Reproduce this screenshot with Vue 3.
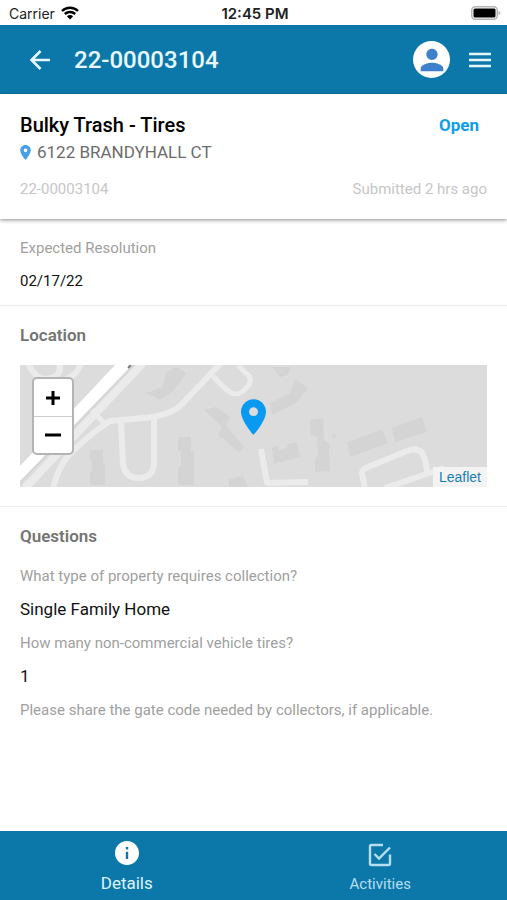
<script setup>
import { ref } from 'vue'

const activeTab = ref('details')

const request = {
  id: '22-00003104',
  title: 'Bulky Trash - Tires',
  status: 'Open',
  address: '6122 BRANDYHALL CT',
  submitted: 'Submitted 2 hrs ago',
  resolution: '02/17/22',
}

const questions = [
  { label: 'What type of property requires collection?', answer: 'Single Family Home' },
  { label: 'How many non-commercial vehicle tires?', answer: '1' },
  { label: 'Please share the gate code needed by collectors, if applicable.', answer: '' },
]
</script>

<template>
  <div class="app">
    <div class="status-bar">
      <div class="carrier">
        <span>Carrier</span>
        <svg class="wifi" viewBox="0 0 18 14" width="18" height="14" aria-hidden="true">
          <path d="M1 5 A11.5 11.5 0 0 1 17 5" />
          <path d="M3.8 8 A7.6 7.6 0 0 1 14.2 8" />
          <path class="dot" d="M9 13.6 L5.9 10.3 A4.4 4.4 0 0 1 12.1 10.3 Z" />
        </svg>
      </div>
      <div class="time">12:45 PM</div>
      <div class="battery">
        <svg viewBox="0 0 30 14" width="30" height="14" aria-hidden="true">
          <rect x="0.75" y="0.75" width="25.5" height="12.5" rx="3.5" fill="#fff" stroke="#b4b4b4" stroke-width="1.5" />
          <rect x="2.5" y="2.5" width="22" height="9" rx="1.5" fill="#000" />
          <path d="M27.5 5 Q29.5 5.5 29.5 7 Q29.5 8.5 27.5 9 Z" fill="#b4b4b4" />
        </svg>
      </div>
    </div>

    <header class="toolbar">
      <button class="icon-button" type="button" aria-label="Back">
        <svg viewBox="0 0 20 20" width="20" height="20" aria-hidden="true">
          <path d="M10.5 1 L1.6 10 L10.5 19 M1.6 10 H20" fill="none" stroke="#e9f8ff" stroke-width="2.5" />
        </svg>
      </button>
      <h1>{{ request.id }}</h1>
      <button class="icon-button avatar" type="button" aria-label="Profile">
        <svg viewBox="0 0 24 24" width="34" height="34" aria-hidden="true">
          <path fill="#3f80cd" d="M12 12c2.21 0 4-1.79 4-4s-1.79-4-4-4-4 1.79-4 4 1.79 4 4 4zm0 2c-2.67 0-8 1.34-8 4v2h16v-2c0-2.66-5.33-4-8-4z" />
        </svg>
      </button>
      <button class="icon-button" type="button" aria-label="Menu">
        <svg viewBox="0 0 24 16" width="24" height="16" aria-hidden="true">
          <path d="M1 2 H23 M1 8 H23 M1 14 H23" stroke="#e4f5fd" stroke-width="2.4" />
        </svg>
      </button>
    </header>

    <main>
      <section class="summary">
        <div class="row">
          <h2>{{ request.title }}</h2>
          <span class="state">{{ request.status }}</span>
        </div>
        <div class="address">
          <svg viewBox="5 2 14 20" width="11" height="15" aria-hidden="true">
            <path fill="#479fe8" d="M12 2C8.13 2 5 5.13 5 9c0 5.25 7 13 7 13s7-7.75 7-13c0-3.87-3.13-7-7-7zm0 9.5c-1.38 0-2.5-1.12-2.5-2.5s1.12-2.5 2.5-2.5 2.5 1.12 2.5 2.5-1.12 2.5-2.5 2.5z" />
          </svg>
          <span>{{ request.address }}</span>
        </div>
        <div class="row meta">
          <span>{{ request.id }}</span>
          <span>{{ request.submitted }}</span>
        </div>
      </section>

      <section class="block resolution">
        <p class="label">Expected Resolution</p>
        <p class="date">{{ request.resolution }}</p>
      </section>

      <section class="block location">
        <h3>Location</h3>
        <div class="map">
          <svg class="tiles" viewBox="0 0 467 122" preserveAspectRatio="xMidYMid slice" aria-hidden="true">
            <rect width="467" height="122" fill="#dcdcdc" />
            <g fill="#d4d4d4">
              <path d="M126 28 L143 22 L146 8 L156 2 L166 8 L156 22 L152 27 L140 35 Z" />
              <path d="M184 45 L196 42 L210 52 L206 60 L224 82 L219 87 L198 70 L202 62 Z" />
              <path d="M158 72 H171 V86 H174 V120 H158 V102 H161 V86 H158 Z" />
              <path d="M70 85 H83 V100 H85 V120 H70 V106 H72 V96 H70 Z" />
              <path d="M209 114 L223 111 L228 122 H209 Z" />
              <path d="M250 38 L270 28 L275 14 L288 23 L276 38 L252 50 Z" />
              <path d="M252 2 H270 L268 10 L260 12 Z" />
              <path d="M290 55 L303 53 L304 75 L309 78 L310 106 L295 107 L295 94 L298 90 L297 72 L291 70 Z" />
              <path d="M252 83 L258 81 L259 85 L267 83 L268 79 L277 77 L280 92 L254 99 Z" />
              <path d="M327 77 L362 65 L368 78 L330 92 Z" />
              <path d="M372 63 L402 52 L407 67 L375 77 Z" />
              <circle cx="314" cy="71" r="2" />
            </g>
            <g fill="none" stroke="#ebebeb" stroke-width="6" stroke-linejoin="round">
              <path d="M8 -2 C14 11 21 17 34 12 Q42 8 39 -2 M61 -2 Q58 10 44 15" />
              <path d="M33 123 Q38 103 48 91 Q66 72 90 56 L133 52 Q151 49 160 41 L201 -2" />
              <path d="M101 57 L103 99 Q105 113 119 113 Q134 112 134 98 V52" />
              <path d="M193 11 Q209 29 215 29 Q222 29 228 21 Q233 14 227 9 L218 1" stroke-width="5" />
              <path d="M241 84 L247 118 L288 117" />
              <path d="M345 123 L342 109 Q342 104 348 102 L387 86 Q397 82 402 88 Q407 97 407 109 M365 123 L424 103" />
            </g>
            <path d="M5 123 L123 -2" stroke="#ebebeb" stroke-width="8" />
            <path d="M72 45 L84 58" stroke="#ebebeb" stroke-width="5" />
            <path d="M0 101 L96 -1 H113 L0 116 Z" fill="#fff" />
            <path d="M0 118 L114 0" stroke="#cfcfcf" stroke-width="1" />
            <path d="M108 3 L111 0" stroke="#777" stroke-width="2" />
          </svg>
          <svg class="marker" viewBox="5 2 14 20" width="25" height="36" role="img" aria-label="Request location">
            <path fill="#089af0" d="M12 2C8.13 2 5 5.13 5 9c0 5.25 7 13 7 13s7-7.75 7-13c0-3.87-3.13-7-7-7zm0 9.5c-1.38 0-2.5-1.12-2.5-2.5s1.12-2.5 2.5-2.5 2.5 1.12 2.5 2.5-1.12 2.5-2.5 2.5z" />
          </svg>
          <div class="zoom">
            <button type="button" aria-label="Zoom in">
              <svg viewBox="0 0 16 16" width="16" height="16" aria-hidden="true"><path d="M1 8 H15 M8 1 V15" /></svg>
            </button>
            <button type="button" aria-label="Zoom out">
              <svg viewBox="0 0 16 16" width="16" height="16" aria-hidden="true"><path d="M0 8 H16" /></svg>
            </button>
          </div>
          <div class="attribution"><a href="#">Leaflet</a></div>
        </div>
      </section>

      <section class="block questions">
        <h3>Questions</h3>
        <dl>
          <template v-for="q in questions" :key="q.label">
            <dt class="label">{{ q.label }}</dt>
            <dd v-if="q.answer">{{ q.answer }}</dd>
          </template>
        </dl>
      </section>
    </main>

    <nav class="tabs">
      <button type="button" :class="{ active: activeTab === 'details' }" @click="activeTab = 'details'">
        <svg viewBox="2 2 20 20" width="24" height="24" aria-hidden="true">
          <path fill="#fff" d="M12 2C6.48 2 2 6.48 2 12s4.48 10 10 10 10-4.48 10-10S17.52 2 12 2zm1 15h-2v-6h2v6zm0-8h-2V7h2v2z" />
        </svg>
        <span>Details</span>
      </button>
      <button type="button" :class="{ active: activeTab === 'activities' }" @click="activeTab = 'activities'">
        <svg viewBox="0 0 24 24" width="24" height="24" aria-hidden="true">
          <path d="M15 2 H3.5 Q2 2 2 3.5 V20.5 Q2 22 3.5 22 H20.5 Q22 22 22 20.5 V11.5 M6.5 11 L11 15.5 L22 4.5" fill="none" stroke="#b5def2" stroke-width="2.4" />
        </svg>
        <span>Activities</span>
      </button>
    </nav>
  </div>
</template>

<style>
body {
  margin: 0;
  background: #fff;
}
</style>

<style scoped>
.app {
  display: flex;
  flex-direction: column;
  min-height: 100vh;
  font-family: Roboto, "Liberation Sans", sans-serif;
  color: #111;
  background: #fff;
}
h1, h2, h3, p, dl, dd {
  margin: 0;
}
button {
  padding: 0;
  border: 0;
  background: none;
  font: inherit;
  color: inherit;
  cursor: pointer;
}
svg {
  display: block;
  flex: none;
}
.status-bar {
  display: grid;
  grid-template-columns: 1fr auto 1fr;
  align-items: center;
  height: 25px;
  padding: 1px 6px 0 9px;
  box-sizing: border-box;
  font-family: Inter, "Liberation Sans", sans-serif;
  font-size: 14px;
  color: #222;
}
.carrier {
  display: flex;
  align-items: center;
  gap: 6px;
}
.wifi path {
  fill: none;
  stroke: #000;
  stroke-width: 2.4;
}
.wifi .dot {
  fill: #000;
  stroke: none;
}
.time {
  font-size: 15px;
  font-weight: 600;
}
.battery {
  justify-self: end;
}
.toolbar {
  display: flex;
  align-items: center;
  height: 69px;
  padding: 0 15px 0 30px;
  background: #0c78a9;
  color: #e9f8ff;
}
.toolbar h1 {
  flex: 1;
  margin-left: 24px;
  font-size: 24px;
  font-weight: 500;
  line-height: 32px;
}
.icon-button {
  display: flex;
  align-items: center;
  justify-content: center;
}
.avatar {
  width: 37px;
  height: 37px;
  margin-right: 18px;
  border-radius: 50%;
  background: #fff;
}
main {
  flex: 1;
}
.summary {
  padding: 19px 20px 20px;
  box-shadow: 0 1px 4px rgba(0, 0, 0, 0.45);
}
.row {
  display: flex;
  align-items: center;
  justify-content: space-between;
}
.summary h2 {
  font-size: 20px;
  font-weight: 500;
  line-height: 24px;
  color: #000;
}
.state {
  margin-right: 8px;
  font-size: 17px;
  font-weight: 700;
  line-height: 22px;
  color: #109cec;
}
.address {
  display: flex;
  align-items: center;
  gap: 6px;
  margin-top: 3px;
  font-size: 17px;
  line-height: 24px;
  color: #6c6c6c;
}
.meta {
  margin-top: 15px;
  font-size: 15px;
  line-height: 20px;
  color: #c6c6c6;
}
.block {
  padding: 0 20px;
}
.block + .block {
  border-top: 1px solid #ececec;
}
.resolution {
  padding-top: 19px;
  padding-bottom: 14px;
}
.label {
  font-size: 15px;
  line-height: 20px;
  color: #a0a0a0;
}
.date {
  margin-top: 13px;
  font-size: 15px;
  line-height: 20px;
}
.location {
  padding-top: 18px;
  padding-bottom: 19px;
}
.questions {
  padding-top: 18px;
  padding-bottom: 19px;
}
h3 {
  font-size: 17px;
  font-weight: 600;
  line-height: 22px;
  color: #747474;
}
.map {
  position: relative;
  height: 122px;
  margin-top: 19px;
  overflow: hidden;
  background: #dcdcdc;
}
.tiles {
  width: 100%;
  height: 100%;
}
.marker {
  position: absolute;
  top: 34px;
  left: calc(50% - 13px);
}
.zoom {
  position: absolute;
  top: 12px;
  left: 12px;
  width: 38px;
  border: 2px solid #b4b4b4;
  border-radius: 5px;
  background: #fff;
}
.zoom button {
  display: flex;
  align-items: center;
  justify-content: center;
  width: 100%;
  height: 37px;
}
.zoom button + button {
  border-top: 1px solid #ccc;
}
.zoom path {
  stroke: #000;
  stroke-width: 3;
}
.attribution {
  position: absolute;
  right: 0;
  bottom: 0;
  padding: 0 6px;
  background: #f3f3f3;
  font: 14px/20px "Liberation Sans", sans-serif;
}
.attribution a {
  color: #1b7fae;
  text-decoration: none;
}
dl {
  margin-top: 19px;
}
dd {
  margin: 12px 0;
  font-size: 17px;
  line-height: 23px;
}
.tabs {
  display: grid;
  grid-template-columns: 1fr 1fr;
  height: 69px;
  background: #0c78a9;
  color: #b5def2;
  font-size: 15px;
}
.tabs button {
  display: flex;
  flex-direction: column;
  align-items: center;
  justify-content: flex-end;
  gap: 7px;
  padding-bottom: 6px;
  line-height: 20px;
}
.tabs .active {
  gap: 8px;
  padding-bottom: 7px;
  color: #dff3fd;
  font-size: 17px;
}
</style>
